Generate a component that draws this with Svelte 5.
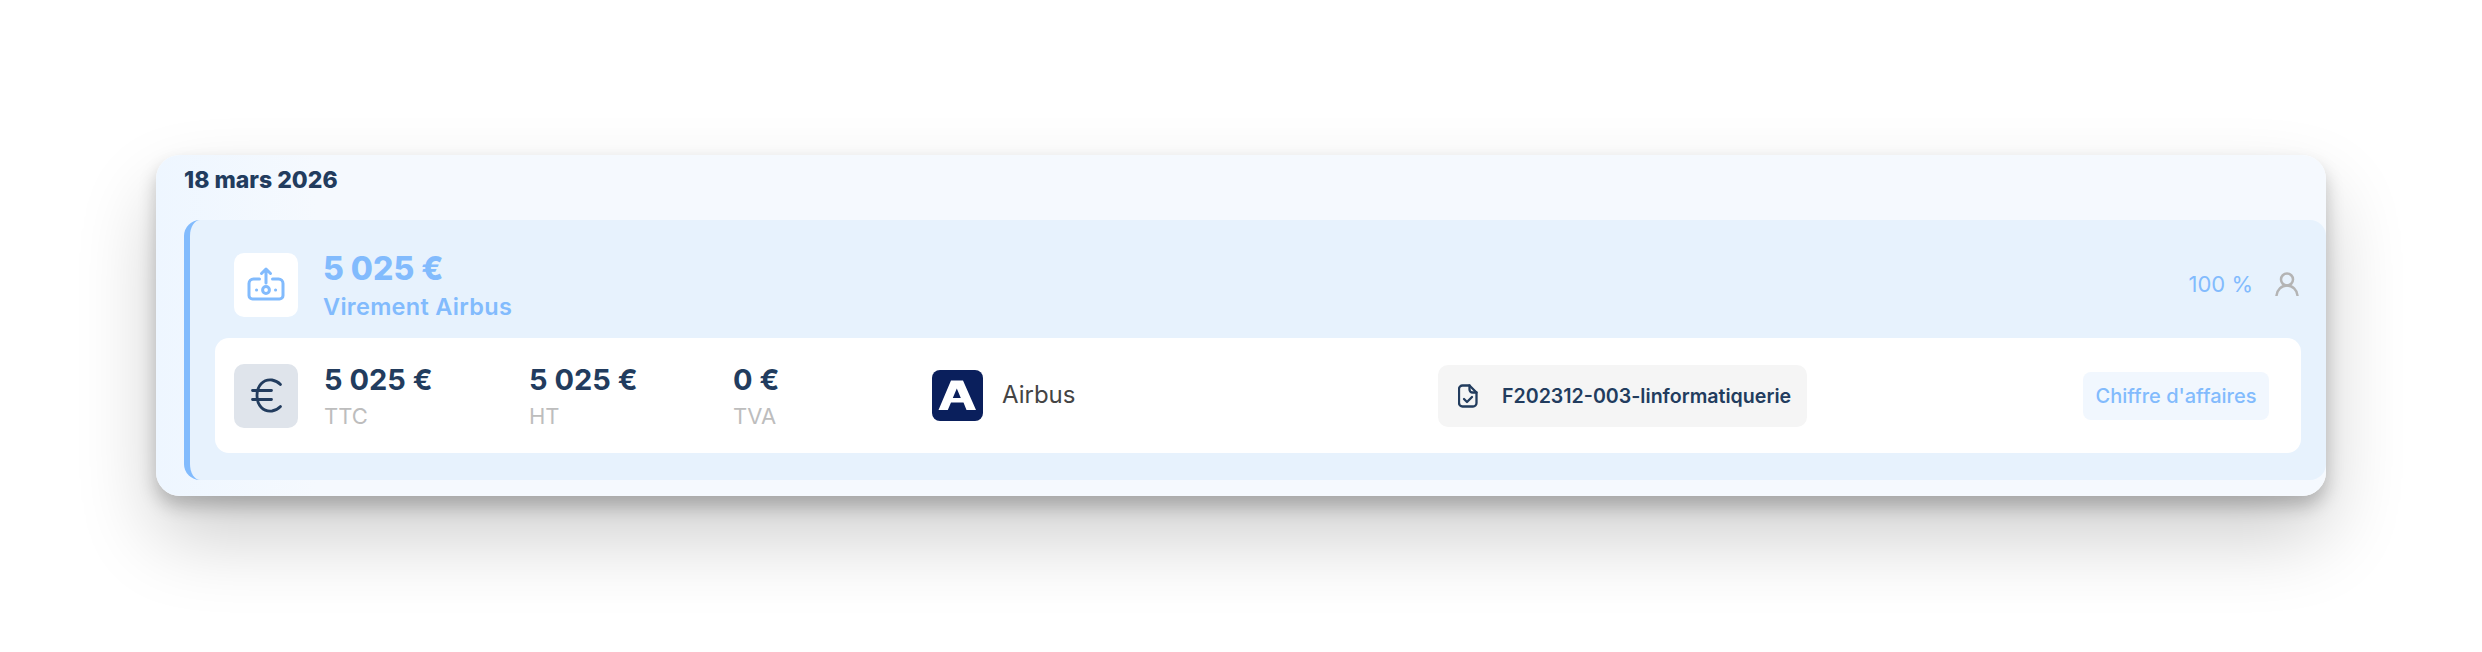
<script>
    const amounts = [
        { value: '5 025 €', label: 'TTC' },
        { value: '5 025 €', label: 'HT' },
        { value: '0 €', label: 'TVA' }
    ];
</script>

<div class="page">
    <section class="card">
        <h2 class="date">18 mars 2026</h2>

        <div class="entry">
            <header class="entry-head">
                <div class="icon-box white">
                    <svg viewBox="0 0 64 64" fill="none" stroke="#82bbfd" stroke-width="3" stroke-linecap="round" stroke-linejoin="round">
                        <path d="M25.500 26h-6a4.500 4.500 0 0 0-4.500 4.500v12a3.500 3.500 0 0 0 3.500 3.500h27a3.500 3.500 0 0 0 3.500-3.500v-12a4.500 4.500 0 0 0-4.500-4.500h-6" />
                        <path d="M32 30V16M27.500 20.500 32 16l4.500 4.500" />
                        <circle cx="32" cy="37" r="3.400" />
                        <path d="M22.500 37h.1M41.500 37h.1" />
                    </svg>
                </div>
                <div class="head-text">
                    <div class="head-amount">5 025 €</div>
                    <div class="head-name">Virement Airbus</div>
                </div>
                <div class="head-right">
                    <span class="percent">100 %</span>
                    <svg class="person" viewBox="0 0 24 24" fill="none" stroke="#b4b4b4" stroke-width="2.500" stroke-linecap="round">
                        <circle cx="12" cy="7.500" r="6" />
                        <path d="M1.500 23.500c.5-5.500 5-10 10.500-10s10 4.500 10.500 10" />
                    </svg>
                </div>
            </header>

            <div class="panel">
                <div class="icon-box grey">
                    <svg viewBox="0 0 64 64" fill="none" stroke="#223c5e" stroke-width="2.800" stroke-linecap="round">
                        <path d="M46.500 20.500a15 15 0 0 0-8.500-4.500c-9-1-15 6-15 15.500s6 16.500 15 15.500a15 15 0 0 0 8.500-4.500" />
                        <path d="M18.500 26.500h19M18.500 35.500h19" />
                    </svg>
                </div>

                <div class="amounts">
                    {#each amounts as a}
                        <div class="amount">
                            <div class="amount-value">{a.value}</div>
                            <div class="amount-label">{a.label}</div>
                        </div>
                    {/each}
                </div>

                <div class="company">
                    <svg class="logo" viewBox="0 0 51 51">
                        <rect width="51" height="51" rx="8" fill="#0a1f5c" />
                        <path fill="#fff" fill-rule="evenodd" d="M6.500 40 19 10.500h12L44 40h-9.500l-3-7.500H19L15.800 40ZM24.800 18.500 20.800 28h8Z" />
                    </svg>
                    <span class="company-name">Airbus</span>
                </div>

                <div class="file">
                    <svg class="file-icon" viewBox="0 0 20 24" fill="none" stroke="#223c5e" stroke-width="2.300" stroke-linecap="round" stroke-linejoin="round">
                        <path d="M4.500 1.500h7l7 7v10.500a3.500 3.500 0 0 1-3.500 3.500H4.500A3.500 3.500 0 0 1 1 19V5a3.500 3.500 0 0 1 3.500-3.500Z" />
                        <path d="M11.500 1.500v4a3 3 0 0 0 3 3h4" />
                        <path d="m6 15 3 3 5-5" />
                    </svg>
                    <span class="file-name">F202312-003-linformatiquerie</span>
                </div>

                <span class="badge">Chiffre d'affaires</span>
            </div>
        </div>
    </section>
</div>

<style>
    :global(body) {
        background: #fff;
    }

    .page {
        height: 652px;
        box-sizing: border-box;
        padding: 155px 156px 0;
        font-family: Inter, "Open Sans", sans-serif;
        overflow: hidden;
    }

    .card {
        height: 341px;
        box-sizing: border-box;
        padding-bottom: 16px;
        display: flex;
        flex-direction: column;
        border-radius: 24px;
        background: linear-gradient(90deg, #eef6ff 0, #f5f9fe 160px);
        box-shadow: 0 10px 18px rgba(0, 0, 0, 0.22), 0 40px 80px rgba(0, 0, 0, 0.2);
    }

    .date {
        height: 65px;
        margin: 0;
        padding: 11px 0 0 28px;
        box-sizing: border-box;
        font-size: 23px;
        line-height: 28px;
        font-weight: 800;
        color: #223c5e;
    }

    .entry {
        flex: 1;
        margin-left: 28px;
        display: flex;
        flex-direction: column;
        border-left: 6px solid #82bbfd;
        border-radius: 16px;
        background: #e7f2fd;
    }

    .entry-head {
        height: 118px;
        box-sizing: border-box;
        padding: 33px 27px 0 44px;
        display: flex;
        align-items: flex-start;
    }

    .icon-box {
        width: 64px;
        height: 64px;
        flex-shrink: 0;
        border-radius: 10px;
    }

    .icon-box svg {
        display: block;
        width: 100%;
        height: 100%;
    }

    .white {
        background: #fff;
    }

    .grey {
        background: #dfe4eb;
    }

    .head-text {
        margin-left: 25px;
        margin-top: -3px;
    }

    .head-amount {
        font-size: 32px;
        line-height: 38px;
        font-weight: 800;
        color: #82bbfd;
    }

    .head-name {
        margin-top: 5px;
        font-size: 23.500px;
        line-height: 28px;
        font-weight: 600;
        letter-spacing: 0.3px;
        color: #82bbfd;
    }

    .head-right {
        margin-left: auto;
        margin-top: 18px;
        display: flex;
        align-items: center;
        gap: 22px;
    }

    .percent {
        font-size: 22px;
        line-height: 26px;
        font-weight: 400;
        color: #82bbfd;
    }

    .person {
        width: 24px;
        height: 24px;
    }

    .panel {
        height: 115px;
        box-sizing: border-box;
        margin: 0 25px;
        padding: 0 32px 0 19px;
        display: flex;
        align-items: center;
        border-radius: 14px;
        background: #fff;
    }

    .amounts {
        width: 608px;
        margin-left: 26px;
        margin-top: -1px;
        display: grid;
        grid-template-columns: 205px 204px 199px;
    }

    .amount-value {
        font-size: 29px;
        line-height: 36px;
        font-weight: 700;
        color: #223c5e;
    }

    .amount-label {
        margin-top: 5px;
        font-size: 22px;
        line-height: 26px;
        color: #bdbdbd;
    }

    .company {
        width: 506px;
        display: flex;
        align-items: center;
        gap: 19px;
    }

    .logo {
        width: 51px;
        height: 51px;
    }

    .company-name {
        margin-top: -2px;
        font-size: 24px;
        font-weight: 400;
        color: #444;
    }

    .file {
        width: 369px;
        height: 62px;
        box-sizing: border-box;
        padding-left: 20px;
        display: flex;
        align-items: center;
        gap: 24px;
        border-radius: 10px;
        background: #f5f5f5;
    }

    .file-icon {
        width: 20px;
        height: 24px;
    }

    .file-name {
        font-size: 19.600px;
        font-weight: 600;
        color: #223c5e;
        white-space: nowrap;
    }

    .badge {
        margin-left: auto;
        width: 186px;
        height: 48px;
        display: flex;
        align-items: center;
        justify-content: center;
        border-radius: 8px;
        background: #f1f7fe;
        font-size: 20px;
        font-weight: 500;
        color: #82bbfd;
    }
</style>
